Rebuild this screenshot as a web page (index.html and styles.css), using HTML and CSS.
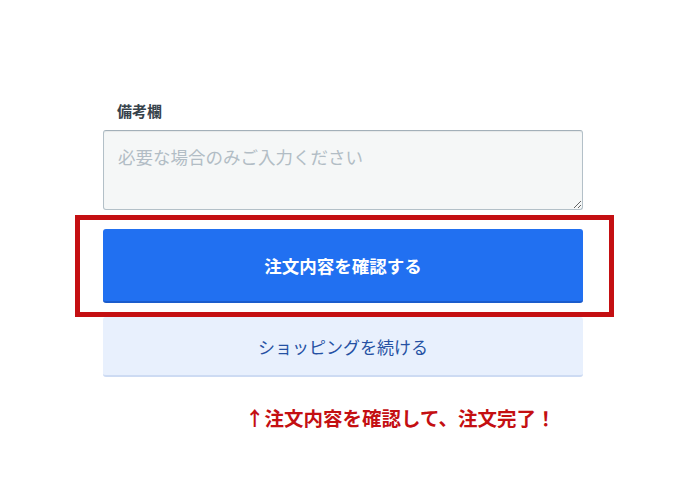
FILE: index.html
```html
<!DOCTYPE html>
<html lang="ja">
<head>
  <meta charset="UTF-8">
  <meta name="viewport" content="width=device-width, initial-scale=1.0">
  <title>注文内容の確認</title>
  <link rel="stylesheet" href="styles.css">
</head>
<body>
  <div class="order-form">
    <label class="field-label" for="note">備考欄</label>
    <textarea id="note" class="note-input" placeholder="必要な場合のみご入力ください"></textarea>

    <div class="confirm-wrap">
      <button class="button button-primary">注文内容を確認する</button>
      <div class="highlight-box"></div>
    </div>

    <button class="button button-secondary">ショッピングを続ける</button>
  </div>

  <p class="note-text">↑注文内容を確認して、注文完了！</p>
</body>
</html>
```

FILE: styles.css
```css
body {
  font-family: "Noto Sans CJK JP", "Noto Sans", sans-serif;
  background-color: white;
  margin: 0;
  padding: 101px 0 0 103px;
}
.order-form {
  width: 480px;
}
.field-label {
  display: block;
  font-size: 15px;
  font-weight: bold;
  line-height: 20px;
  color: #36424b;
  margin: 0 0 9px 14px;
}
.note-input {
  display: block;
  box-sizing: border-box;
  width: 480px;
  height: 80px;
  margin: 0;
  padding: 14px 14px;
  font-family: inherit;
  font-size: 17.5px;
  line-height: 24px;
  color: #333;
  background-color: #f5f7f7;
  border: 1px solid #b3c0c8;
  border-top-color: #a3b0b9;
  border-radius: 3px;
  box-shadow: inset 0 1px 1px rgba(0, 0, 0, 0.06);
}
.note-input::placeholder {
  color: #b2bdc5;
}
.confirm-wrap {
  position: relative;
  margin-top: 19px;
}
.button {
  display: block;
  box-sizing: border-box;
  width: 480px;
  border: none;
  border-radius: 3px;
  font-family: inherit;
  cursor: pointer;
  margin: 0;
}
.button-primary {
  height: 74px;
  background-color: #2170f1;
  border-bottom: 2px solid #1b5ccc;
  color: white;
  font-size: 17.5px;
  font-weight: bold;
}
.button-secondary {
  height: 60px;
  margin-top: 14px;
  padding-right: 6px;
  background-color: #e8f0fd;
  border-bottom: 2px solid #cddbf3;
  color: #2551a3;
  font-size: 17px;
}
.highlight-box {
  position: absolute;
  left: -28px;
  top: -14px;
  width: 539px;
  height: 102px;
  box-sizing: border-box;
  border: 5px solid #c40f12;
  pointer-events: none;
}
.note-text {
  margin: 29px 0 0 142px;
  font-size: 19.5px;
  font-weight: bold;
  line-height: 24px;
  color: #c40f12;
}
```
